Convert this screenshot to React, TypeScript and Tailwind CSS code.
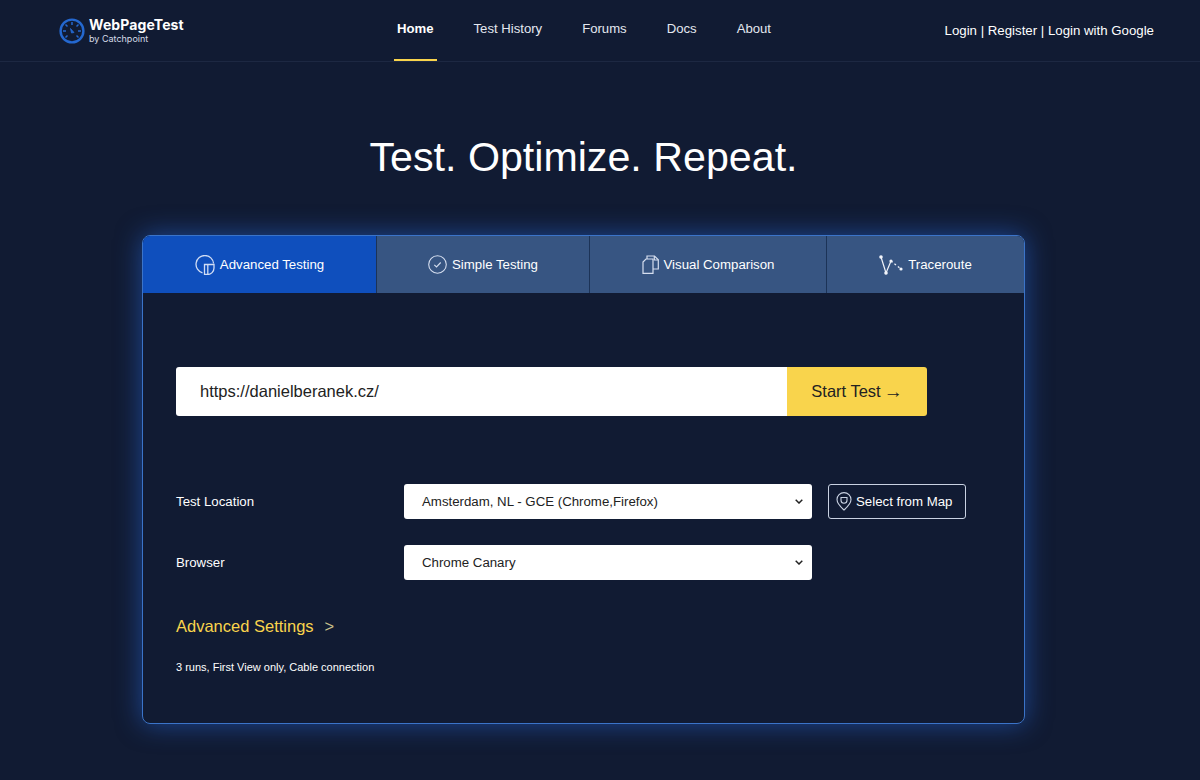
import * as React from 'react'

const navItems = ['Home', 'Test History', 'Forums', 'Docs', 'About']

function GaugeLogo() {
	return (
		<svg width="26" height="26" viewBox="0 0 26 26" fill="none" stroke="#2468d0" strokeWidth="2.400">
			<circle cx="13" cy="13" r="11.400" />
			<path d="M13 4v3M4 13h3M19 13h3M6.500 6.500l2 2M19.500 6.500l-2 2M6.500 19.500l2-2M19.500 19.500l-2-2" strokeWidth="1.500" />
			<path d="M11.500 10.500l3.500 4-2.500.5z" fill="#2468d0" strokeWidth="0.800" />
		</svg>
	)
}

function PieIcon() {
	return (
		<svg width="20" height="20" viewBox="0 0 20 20" fill="none" stroke="#d0dcf4" strokeWidth="1.300">
			<path d="M18.600 8.500A8.800 8.800 0 1 0 7.500 17.800" />
			<path d="M9.500 9.500h9.500v3.500a6.500 6.500 0 0 1-6.500 6.500h-3z" />
			<path d="M12.800 9.500v9.500" />
		</svg>
	)
}

function CheckCircleIcon() {
	return (
		<svg width="19" height="19" viewBox="0 0 19 19" fill="none" stroke="#d5deef" strokeWidth="1.100">
			<circle cx="9.500" cy="9.500" r="8.800" />
			<path d="M6.300 9.800l2.200 2.100 4.200-4.400" />
		</svg>
	)
}

function PagesIcon() {
	return (
		<svg width="17" height="19" viewBox="0 0 17 19" fill="none" stroke="#d5deef" strokeWidth="1.200">
			<path d="M1 7l3-3h7v14.400H1z" />
			<path d="M5 4V1h7.500l3.800 3.800V14h-5.300" />
			<path d="M12.300 1v4h4" />
		</svg>
	)
}

function RouteIcon() {
	return (
		<svg width="24" height="20" viewBox="0 0 24 20" fill="none" stroke="#f1f4fa" strokeWidth="1.200">
			<path d="M2 2l5 16 5-12" />
			<path d="M12 6l10 8" strokeDasharray="2 2.400" />
			<g fill="#f1f4fa" stroke="none">
				<circle cx="2" cy="2" r="1.800" />
				<circle cx="7" cy="18" r="1.800" />
				<circle cx="12" cy="6" r="1.600" />
				<circle cx="22" cy="14" r="1.600" />
			</g>
		</svg>
	)
}

function PinIcon() {
	return (
		<svg width="16" height="19" viewBox="0 0 16 19" fill="none" stroke="#c9d2e2" strokeWidth="1.100">
			<path d="M8 18C4 14.500 1 11.500 1 7.600a7 7 0 0 1 14 0C15 11.500 12 14.500 8 18z" />
			<path d="M5 5.500h6v2.700a3 3 0 0 1-6 0z" />
		</svg>
	)
}

function Chevron() {
	return (
		<svg width="8" height="5" viewBox="0 0 8 5" fill="none" stroke="#222" strokeWidth="1.500" className="shrink-0">
			<path d="M.7.800L4 4l3.300-3.200" />
		</svg>
	)
}

function Select({ value }: { value: string }) {
	return (
		<div className="flex h-[35px] w-[408px] items-center justify-between rounded-[3px] bg-white pr-[9px] pl-[18px] text-[13.250px] text-[#222]">
			<span>{value}</span>
			<Chevron />
		</div>
	)
}

function Tab({
	icon,
	label,
	active,
	width,
}: {
	icon: React.ReactNode
	label: string
	active?: boolean
	width: string
}) {
	return (
		<div
			className={`flex items-center justify-center gap-[5px] border-r border-[#1c3357] text-[13.250px] text-white last:border-r-0 ${width} ${
				active ? 'bg-[#0f4fbd]' : 'bg-[#375582]'
			}`}
		>
			{icon}
			<span>{label}</span>
		</div>
	)
}

export default function App() {
	return (
		<div className="min-h-[780px] w-[1200px] bg-[#111b33] font-['Liberation_Sans',Arial,sans-serif] text-white">
			<header className="flex h-[62px] items-center border-b border-[#1d2842] pr-[46px] pl-[59px]">
				<div className="flex w-[335px] items-center gap-[4px]">
					<GaugeLogo />
					<div className="flex flex-col leading-none">
						<span className="font-['Inter',sans-serif] text-[14px] font-bold tracking-[0.1px]">WebPageTest</span>
						<span className="mt-[2px] font-['Inter',sans-serif] text-[9px] text-[#d5dbe8]">by Catchpoint</span>
					</div>
				</div>
				<nav className="flex h-full items-stretch gap-[34px]">
					{navItems.map((item, i) => (
						<div
							key={item}
							className={`relative flex items-center px-[3px] pb-[4px] text-[13.150px] ${i === 0 ? 'font-bold' : 'text-[#e4e8f0]'}`}
						>
							{item}
							{i === 0 && <span className="absolute right-0 bottom-0 left-0 h-[2px] bg-[#f9d44c]" />}
						</div>
					))}
				</nav>
				<div className="ml-auto text-[13.250px]">Login | Register | Login with Google</div>
			</header>
			<main className="flex w-[1167px] flex-col items-center pb-[56px]">
				<h1 className="mt-[67px] text-[41.200px] leading-[56px] font-normal">Test. Optimize. Repeat.</h1>
				<section className="mt-[50px] h-[489px] w-[883px] rounded-[8px] border border-[#3b74c9] shadow-[0_0_26px_rgba(40,110,230,0.55)]">
					<div className="flex h-[57px] overflow-hidden rounded-t-[7px]">
						<Tab active width="w-[234px]" icon={<PieIcon />} label="Advanced Testing" />
						<Tab width="w-[213px]" icon={<CheckCircleIcon />} label="Simple Testing" />
						<Tab width="w-[237px]" icon={<PagesIcon />} label="Visual Comparison" />
						<Tab width="flex-1" icon={<RouteIcon />} label="Traceroute" />
					</div>
					<div className="px-[33px] pt-[74px]">
						<div className="flex h-[49px] w-[751px] overflow-hidden rounded-[3px] text-[16.500px] text-[#222]">
							<div className="flex flex-1 items-center bg-white pl-[24px]">https://danielberanek.cz/</div>
							<div className="flex w-[140px] items-center justify-center gap-[3px] bg-[#f9d44c]">
								<span>Start Test</span>
								<span className="text-[19px] leading-none">→</span>
							</div>
						</div>
						<div className="mt-[68px] flex items-center">
							<div className="w-[228px] text-[13.250px]">Test Location</div>
							<Select value="Amsterdam, NL - GCE (Chrome,Firefox)" />
							<div className="ml-[16px] flex h-[35px] w-[138px] items-center gap-[4px] rounded-[3px] border border-[#c9d2e2] pl-[7px] text-[13.250px]">
								<PinIcon />
								<span>Select from Map</span>
							</div>
						</div>
						<div className="mt-[26px] flex items-center">
							<div className="w-[228px] text-[13.250px]">Browser</div>
							<Select value="Chrome Canary" />
						</div>
						<div className="mt-[34px] flex items-center text-[16.500px] text-[#f9d44c]">
							<span>Advanced Settings</span>
							<span className="ml-[11px] text-[#c9c08c]">&gt;</span>
						</div>
						<div className="mt-[20px] text-[11px]">3 runs, First View only, Cable connection</div>
					</div>
				</section>
			</main>
		</div>
	)
}
